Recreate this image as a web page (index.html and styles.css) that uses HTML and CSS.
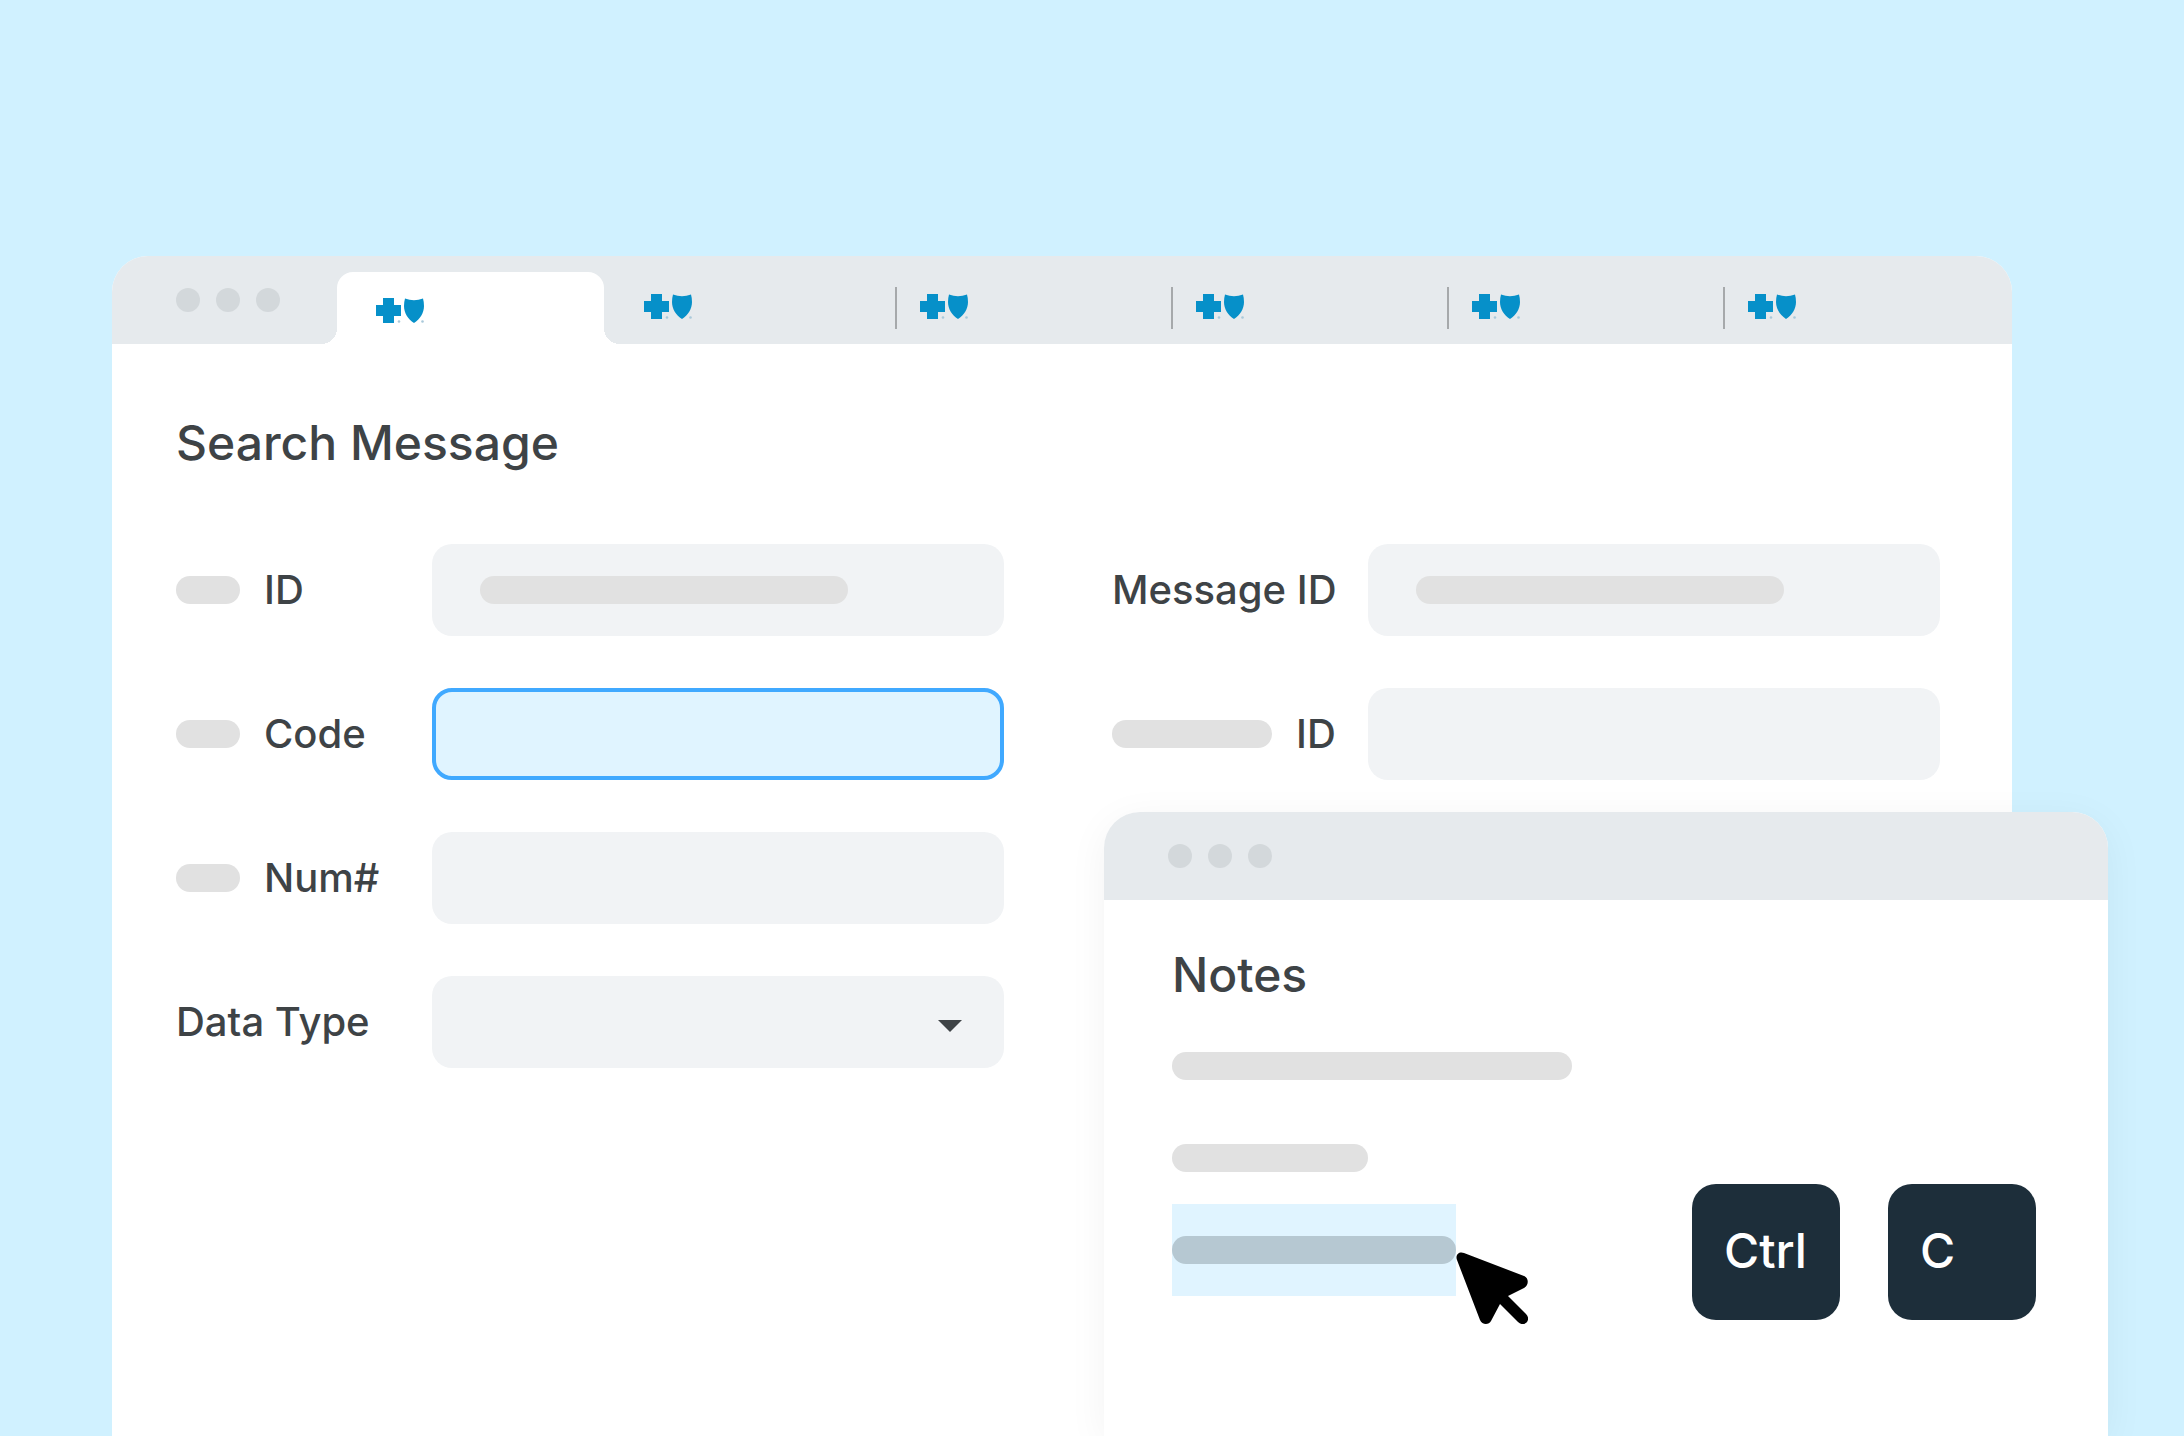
FILE: index.html
```html
<!DOCTYPE html>
<html lang="en">
<head>
<meta charset="utf-8">
<title>Search Message</title>
<meta name="viewport" content="width=device-width, initial-scale=1">
<link rel="stylesheet" href="styles.css">
</head>
<body>
<svg class="sprite" aria-hidden="true">
  <symbol id="logo" viewBox="0 0 48 25">
    <path d="M7 0H18V7H25V18H18V25H7V18H0V7H7Z"/>
    <path d="M29 0.5Q38 4 47 0.5Q48 4 48 8C48 15 44 21 38 25C32 21 28 15 28 8Q28 4 29 0.5Z"/>
    <circle class="logo-mark" cx="23" cy="23.5" r="1.3"/>
    <circle class="logo-mark" cx="46.5" cy="23.5" r="1.3"/>
  </symbol>
</svg>
<div class="page">
  <main class="window">
    <div class="bar">
      <div class="dots"><i></i><i></i><i></i></div>
      <button class="tab tab-active" type="button" aria-label="Tab 1"><svg class="logo"><use href="#logo"/></svg></button>
      <div class="tabs">
        <button class="tab" type="button" aria-label="Tab 2"><svg class="logo"><use href="#logo"/></svg></button>
        <button class="tab" type="button" aria-label="Tab 3"><svg class="logo"><use href="#logo"/></svg></button>
        <button class="tab" type="button" aria-label="Tab 4"><svg class="logo"><use href="#logo"/></svg></button>
        <button class="tab" type="button" aria-label="Tab 5"><svg class="logo"><use href="#logo"/></svg></button>
        <button class="tab" type="button" aria-label="Tab 6"><svg class="logo"><use href="#logo"/></svg></button>
      </div>
    </div>
    <form class="search">
      <h1 class="title">Search Message</h1>
      <div class="columns">
        <div class="column">
          <div class="row">
            <label class="label" for="id"><span class="pill pill-short"></span>ID</label>
            <div class="control"><input class="field" id="id" type="text"><span class="pill pill-value"></span></div>
          </div>
          <div class="row">
            <label class="label" for="code"><span class="pill pill-short"></span>Code</label>
            <div class="control"><input class="field field-current" id="code" type="text"></div>
          </div>
          <div class="row">
            <label class="label" for="num"><span class="pill pill-short"></span>Num#</label>
            <div class="control"><input class="field" id="num" type="text"></div>
          </div>
          <div class="row">
            <label class="label" for="type">Data Type</label>
            <div class="control">
              <select class="field" id="type"><option></option></select>
              <svg class="caret" viewBox="0 0 24 12" aria-hidden="true"><path d="M0 0H24L12 12Z"/></svg>
            </div>
          </div>
        </div>
        <div class="column">
          <div class="row">
            <label class="label" for="message-id">Message ID</label>
            <div class="control"><input class="field" id="message-id" type="text"><span class="pill pill-value"></span></div>
          </div>
          <div class="row">
            <label class="label" for="other-id"><span class="pill pill-medium"></span>ID</label>
            <div class="control"><input class="field" id="other-id" type="text"></div>
          </div>
        </div>
      </div>
    </form>
  </main>

  <aside class="notes">
    <div class="bar"><div class="dots"><i></i><i></i><i></i></div></div>
    <div class="notes-body">
      <h2 class="title">Notes</h2>
      <div class="pill line-long"></div>
      <div class="pill line-short"></div>
      <div class="notes-row">
        <div class="selection">
          <div class="pill pill-selected"></div>
          <svg class="cursor" viewBox="0 0 72 72" aria-hidden="true"><path d="M1 8C-1 3 3 -1 8 1L68 24C73 26 73 33 68 36L52 44L70 62C76 68 68 76 62 70L44 52L35 69C33 73 26 73 24 68Z"/></svg>
        </div>
        <div class="keys"><kbd class="key">Ctrl</kbd><kbd class="key">C</kbd></div>
      </div>
    </div>
  </aside>
</div>
</body>
</html>
```
FILE: styles.css
```css
* {
  box-sizing: border-box;
}

body {
  margin: 0;
  background: #d0f1ff;
  color: #3e4346;
  font-family: Inter, "Liberation Sans", sans-serif;
}

.sprite {
  position: absolute;
  width: 0;
  height: 0;
}

.page {
  position: relative;
  display: flex;
  flex-direction: column;
  min-height: 100vh;
  padding: 256px 172px 0 112px;
}

.window {
  flex: 1;
  background: #fff;
  border-radius: 36px 36px 0 0;
}

/* Title bars and tabs */
.bar {
  display: flex;
  align-items: flex-end;
  height: 88px;
  padding-left: 64px;
  background: #e6eaed;
  border-radius: 36px 36px 0 0;
}

.dots {
  display: flex;
  flex: none;
  align-items: center;
  gap: 16px;
  width: 161px;
  height: 88px;
}

.dots i {
  width: 24px;
  height: 24px;
  border-radius: 50%;
  background: #d3d8db;
}

.tabs {
  display: flex;
  flex: 1;
  height: 72px;
  align-items: center;
  padding-left: 15px;
}

.tab {
  flex: 0 1 276px;
  height: 42px;
  padding: 0 0 3px 23px;
  border: 0;
  border-left: 2px solid #a6a9ab;
  background: none;
  text-align: left;
}

.tab:first-child {
  border-color: transparent;
}

.tab-active {
  position: relative;
  flex: 0 1 267px;
  height: 72px;
  padding: 4px 0 0 39px;
  border: 0;
  border-radius: 16px 16px 0 0;
  background: #fff;
}

.tab-active::before,
.tab-active::after {
  content: "";
  position: absolute;
  bottom: 0;
  width: 16px;
  height: 16px;
}

.tab-active::before {
  right: 100%;
  background: radial-gradient(circle at 0 0, transparent 16px, #fff 16px);
}

.tab-active::after {
  left: 100%;
  background: radial-gradient(circle at 100% 0, transparent 16px, #fff 16px);
}

.logo {
  display: block;
  width: 48px;
  height: 25px;
  fill: #0690c9;
}

.logo-mark {
  fill: #a9c9da;
}

/* Search form */
.search {
  padding: 70px 72px 72px 64px;
}

.title {
  margin: 0;
  font-size: 48px;
  font-weight: 500;
  line-height: 58px;
}

.columns {
  display: grid;
  grid-template-columns: 1fr 1fr;
  gap: 108px;
  margin-top: 72px;
}

.column {
  display: flex;
  flex-direction: column;
  gap: 52px;
}

.row {
  display: grid;
  grid-template-columns: 256px 1fr;
  align-items: center;
}

.label {
  display: flex;
  align-items: center;
  gap: 24px;
  font-size: 40px;
  font-weight: 500;
  line-height: 48px;
  white-space: nowrap;
}

.pill {
  flex: none;
  height: 28px;
  border-radius: 14px;
  background: #e1e1e1;
}

.pill-short {
  width: 64px;
}

.pill-medium {
  width: 160px;
}

.control {
  display: grid;
  align-items: center;
}

.control > * {
  grid-area: 1 / 1;
}

.field {
  width: 100%;
  height: 92px;
  padding: 0 48px;
  border: 0;
  border-radius: 20px;
  outline: 0;
  background: #f1f3f5;
  color: inherit;
  font: inherit;
  font-size: 40px;
  appearance: none;
}

.field-current {
  border: 4px solid #40a9ff;
  background: #e0f4ff;
}

.pill-value {
  width: 368px;
  margin-left: 48px;
  pointer-events: none;
}

.caret {
  justify-self: end;
  width: 24px;
  height: 12px;
  margin: 8px 42px 0 0;
  fill: #3e4346;
  pointer-events: none;
}

/* Notes window, floating over the search window */
.notes {
  position: absolute;
  top: 812px;
  right: 76px;
  bottom: 0;
  left: calc(50% + 12px);
  border-radius: 36px 36px 0 0;
  background: #fff;
  box-shadow: 0 8px 40px rgba(0, 0, 0, 0.05);
}

.notes-body {
  padding: 46px 72px 0 68px;
}

.line-long {
  width: 400px;
  margin-top: 48px;
}

.line-short {
  width: 196px;
  margin-top: 64px;
}

.notes-row {
  display: flex;
  justify-content: space-between;
  padding-top: 12px;
}

.selection {
  position: relative;
  display: flex;
  align-items: center;
  width: 284px;
  height: 92px;
  margin-top: 20px;
  background: #e0f4ff;
}

.pill-selected {
  width: 100%;
  background: #b6c8d2;
}

.cursor {
  position: absolute;
  top: 48px;
  left: 100%;
  width: 72px;
  height: 72px;
}

.keys {
  display: flex;
  gap: 48px;
}

.key {
  display: flex;
  align-items: center;
  width: 148px;
  height: 136px;
  padding: 0 0 2px 32px;
  border-radius: 24px;
  background: #1d2e3a;
  color: #fff;
  font-family: inherit;
  font-size: 48px;
  font-weight: 500;
  line-height: 58px;
}
```
